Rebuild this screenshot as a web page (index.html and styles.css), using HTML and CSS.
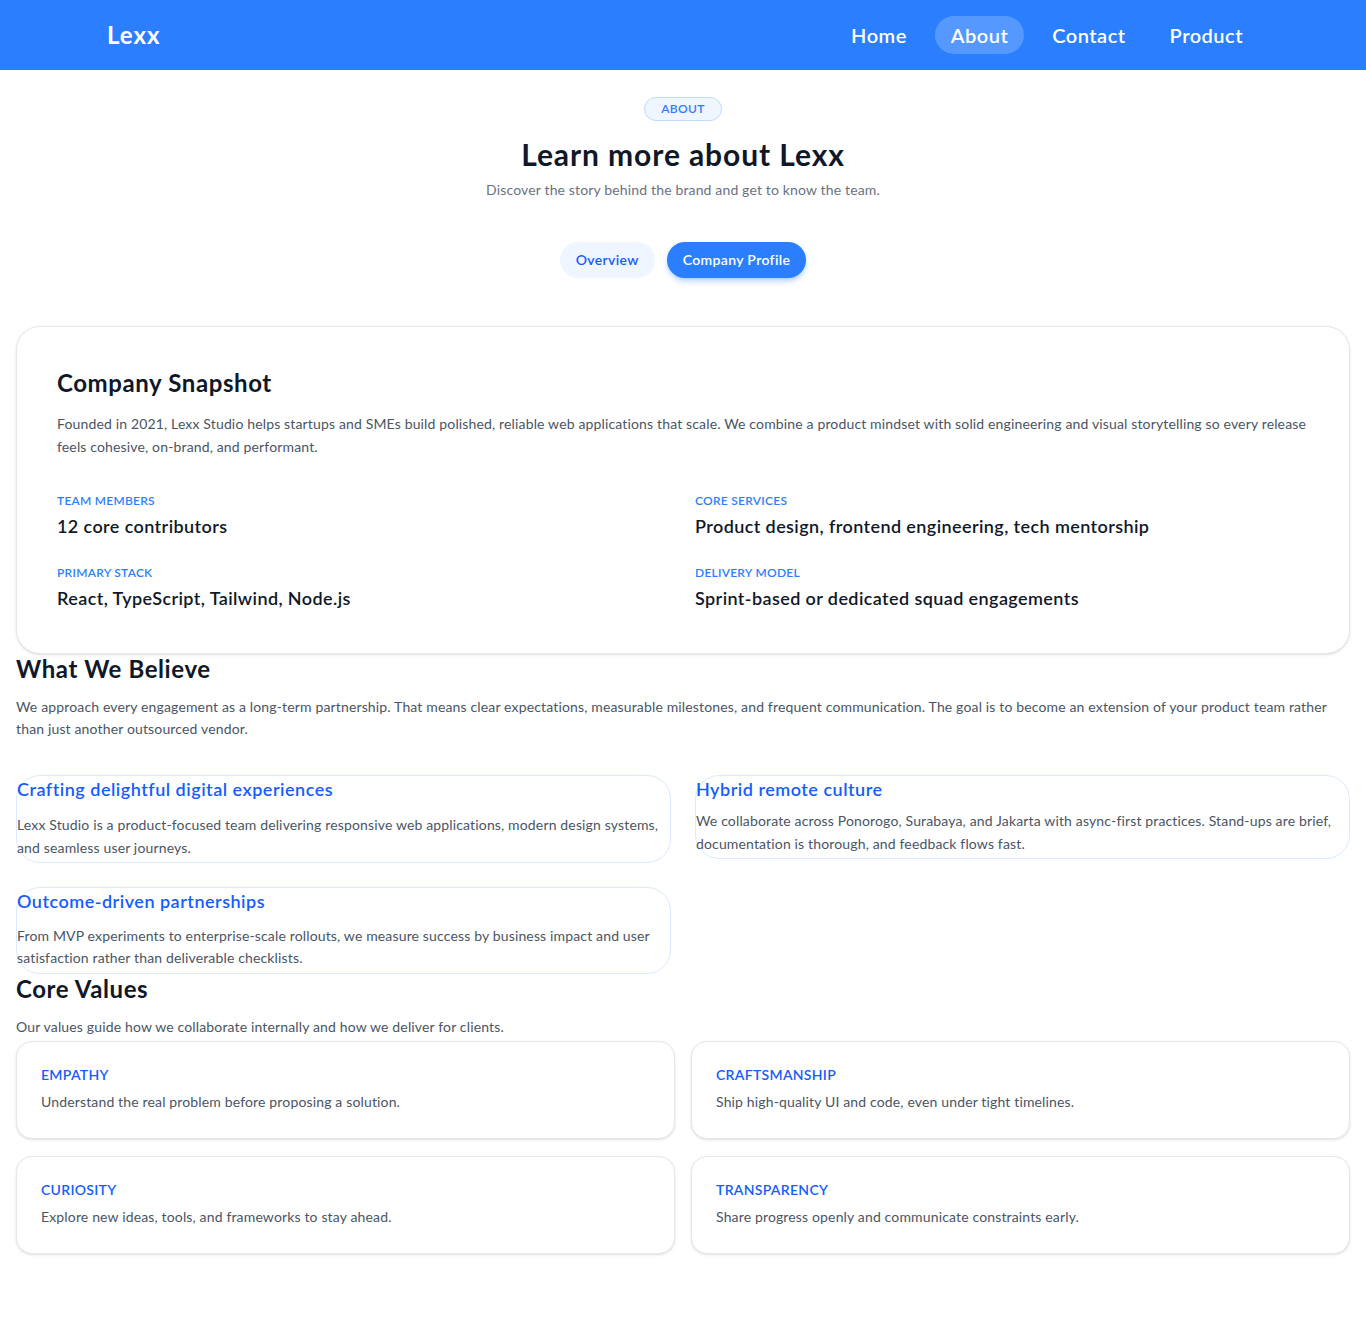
FILE: index.html
```html
<!DOCTYPE html>
<html lang="en">
<head>
<meta charset="utf-8">
<title>About - Lexx</title>
<link rel="stylesheet" href="styles.css">
</head>
<body>
<header class="topbar">
  <div class="topbar-inner">
    <a class="logo" href="#">Lexx</a>
    <nav class="nav">
      <a class="nav-link" href="#">Home</a>
      <a class="nav-link active" href="#">About</a>
      <a class="nav-link" href="#">Contact</a>
      <a class="nav-link" href="#">Product</a>
    </nav>
  </div>
</header>

<main class="page">
  <section class="hero">
    <span class="badge">ABOUT</span>
    <h1 class="hero-title">Learn more about Lexx</h1>
    <p class="hero-sub">Discover the story behind the brand and get to know the team.</p>
    <div class="tabs">
      <button class="tab">Overview</button>
      <button class="tab tab-active">Company Profile</button>
    </div>
  </section>

  <section class="snapshot">
    <h2 class="snapshot-title">Company Snapshot</h2>
    <p class="snapshot-text">Founded in 2021, Lexx Studio helps startups and SMEs build polished, reliable web applications that scale. We combine a product mindset with solid engineering and visual storytelling so every release feels cohesive, on-brand, and performant.</p>
    <dl class="facts">
      <div class="fact">
        <dt class="fact-label">Team Members</dt>
        <dd class="fact-value">12 core contributors</dd>
      </div>
      <div class="fact">
        <dt class="fact-label">Core Services</dt>
        <dd class="fact-value">Product design, frontend engineering, tech mentorship</dd>
      </div>
      <div class="fact">
        <dt class="fact-label">Primary Stack</dt>
        <dd class="fact-value">React, TypeScript, Tailwind, Node.js</dd>
      </div>
      <div class="fact">
        <dt class="fact-label">Delivery Model</dt>
        <dd class="fact-value">Sprint-based or dedicated squad engagements</dd>
      </div>
    </dl>
  </section>

  <section class="believe">
    <h2 class="section-title">What We Believe</h2>
    <p class="section-text">We approach every engagement as a long-term partnership. That means clear expectations, measurable milestones, and frequent communication. The goal is to become an extension of your product team rather than just another outsourced vendor.</p>
    <div class="belief-grid">
      <article class="belief">
        <h3 class="belief-title">Crafting delightful digital experiences</h3>
        <p class="belief-text">Lexx Studio is a product-focused team delivering responsive web applications, modern design systems, and seamless user journeys.</p>
      </article>
      <article class="belief belief-tight">
        <h3 class="belief-title">Hybrid remote culture</h3>
        <p class="belief-text">We collaborate across Ponorogo, Surabaya, and Jakarta with async-first practices. Stand-ups are brief, documentation is thorough, and feedback flows fast.</p>
      </article>
      <article class="belief belief-compact">
        <h3 class="belief-title">Outcome-driven partnerships</h3>
        <p class="belief-text">From MVP experiments to enterprise-scale rollouts, we measure success by business impact and user satisfaction rather than deliverable checklists.</p>
      </article>
    </div>
  </section>

  <section class="values">
    <h2 class="section-title">Core Values</h2>
    <p class="values-text">Our values guide how we collaborate internally and how we deliver for clients.</p>
    <div class="value-grid">
      <article class="value">
        <h3 class="value-title">Empathy</h3>
        <p class="value-text">Understand the real problem before proposing a solution.</p>
      </article>
      <article class="value">
        <h3 class="value-title">Craftsmanship</h3>
        <p class="value-text">Ship high-quality UI and code, even under tight timelines.</p>
      </article>
      <article class="value">
        <h3 class="value-title">Curiosity</h3>
        <p class="value-text">Explore new ideas, tools, and frameworks to stay ahead.</p>
      </article>
      <article class="value">
        <h3 class="value-title">Transparency</h3>
        <p class="value-text">Share progress openly and communicate constraints early.</p>
      </article>
    </div>
  </section>
</main>
</body>
</html>
```

FILE: styles.css
```css
* { box-sizing: border-box; }

html, body {
  margin: 0;
  padding: 0;
  background: #ffffff;
}

body {
  font-family: "Lato", "Noto Sans", "Liberation Sans", sans-serif;
  color: #101828;
  letter-spacing: 0.15px;
}

h1, h2, h3, p, dl, dd, dt { margin: 0; }

a { text-decoration: none; color: inherit; }

/* Header */
.topbar {
  background: #2b7fff;
  height: 70px;
}

.topbar-inner {
  max-width: 1152px;
  height: 70px;
  margin: 0 auto;
  display: flex;
  align-items: center;
  justify-content: space-between;
}

.logo {
  color: #ffffff;
  font-size: 24px;
  font-weight: 700;
  line-height: 32px;
  letter-spacing: 1px;
}

.nav {
  display: flex;
  gap: 12px;
}

.nav-link {
  color: #ffffff;
  font-size: 20px;
  font-weight: 600;
  line-height: 30px;
  letter-spacing: 0.5px;
  padding: 4px 16px;
  border-radius: 999px;
}

.nav-link.active {
  background: rgba(255, 255, 255, 0.2);
}

/* Page */
.page {
  padding: 27px 16px 64px;
}

.hero {
  display: flex;
  flex-direction: column;
  align-items: center;
  text-align: center;
}

.badge {
  display: inline-block;
  font-size: 12px;
  font-weight: 600;
  letter-spacing: 0.03em;
  line-height: 16px;
  padding: 3px 16px;
  color: #2b7fff;
  background: #eff6ff;
  border: 1px solid #bedbff;
  border-radius: 999px;
}

.hero-title {
  margin-top: 15px;
  font-size: 30px;
  line-height: 36px;
  font-weight: 700;
  letter-spacing: 0.9px;
  color: #101828;
}

.hero-sub {
  margin-top: 8px;
  font-size: 14px;
  line-height: 20px;
  color: #6a7282;
}

.tabs {
  margin-top: 42px;
  display: flex;
  gap: 12px;
}

.tab {
  font-family: inherit;
  font-size: 14px;
  font-weight: 600;
  line-height: 20px;
  letter-spacing: 0.35px;
  padding: 8px 16px;
  border: 0;
  border-radius: 999px;
  background: #eff6ff;
  color: #155dfc;
  cursor: pointer;
}

.tab-active {
  background: #2b7fff;
  color: #ffffff;
  box-shadow: 0 4px 6px -1px rgba(43, 127, 255, 0.3), 0 2px 4px -2px rgba(43, 127, 255, 0.3);
}

/* Snapshot card */
.snapshot {
  margin-top: 48px;
  padding: 40px 40px 42px;
  border: 1px solid #e5e7eb;
  border-radius: 24px;
  background: #ffffff;
  box-shadow: 0 1px 3px rgba(0, 0, 0, 0.1), 0 1px 2px -1px rgba(0, 0, 0, 0.1);
}

.snapshot-title {
  font-size: 24px;
  line-height: 32px;
  font-weight: 700;
  letter-spacing: 0.6px;
  color: #101828;
}

.snapshot-text {
  margin-top: 13px;
  font-size: 14px;
  line-height: 23px;
  color: #4a5565;
}

.facts {
  margin-top: 35px;
  display: grid;
  grid-template-columns: 1fr 1fr;
  column-gap: 24px;
  row-gap: 26px;
}

.fact-label {
  font-size: 12px;
  line-height: 16px;
  font-weight: 600;
  letter-spacing: 0.25px;
  text-transform: uppercase;
  color: #2b7fff;
}

.fact-value {
  margin-top: 4px;
  font-size: 18px;
  line-height: 26px;
  font-weight: 600;
  letter-spacing: 0.4px;
  color: #101828;
}

/* Believe */
.section-title {
  font-size: 24px;
  line-height: 30px;
  font-weight: 700;
  letter-spacing: 0.6px;
  color: #101828;
}

.section-text {
  margin-top: 12px;
  font-size: 14px;
  line-height: 22px;
  color: #4a5565;
}

.belief-grid {
  margin-top: 35px;
  display: grid;
  grid-template-columns: 1fr 1fr;
  column-gap: 24px;
  row-gap: 24px;
  align-items: start;
}

.belief {
  border: 1px solid #dbeafe;
  border-radius: 24px;
  padding-bottom: 3px;
}

.belief-title {
  font-size: 18px;
  line-height: 26px;
  font-weight: 600;
  letter-spacing: 0.5px;
  color: #155dfc;
}

.belief-text {
  margin-top: 11px;
  font-size: 14px;
  line-height: 23px;
  color: #4a5565;
}

.belief-tight .belief-text {
  margin-top: 7px;
}

.belief-compact {
  padding-bottom: 4px;
}

.belief-compact .belief-text {
  line-height: 22px;
}

/* Values */
.values-text {
  margin-top: 13px;
  font-size: 14px;
  line-height: 20px;
  color: #4a5565;
}

.value-grid {
  margin-top: 4px;
  display: grid;
  grid-template-columns: 1fr 1fr;
  gap: 17px 16px;
}

.value {
  padding: 23px 24px 26px;
  border: 1px solid #e5e7eb;
  border-radius: 16px;
  background: #ffffff;
  box-shadow: 0 1px 3px rgba(0, 0, 0, 0.1), 0 1px 2px -1px rgba(0, 0, 0, 0.1);
}

.value-title {
  font-size: 14px;
  line-height: 20px;
  font-weight: 600;
  letter-spacing: 0.3px;
  text-transform: uppercase;
  color: #155dfc;
}

.value-text {
  margin-top: 7px;
  font-size: 14px;
  line-height: 20px;
  color: #4a5565;
}
```
